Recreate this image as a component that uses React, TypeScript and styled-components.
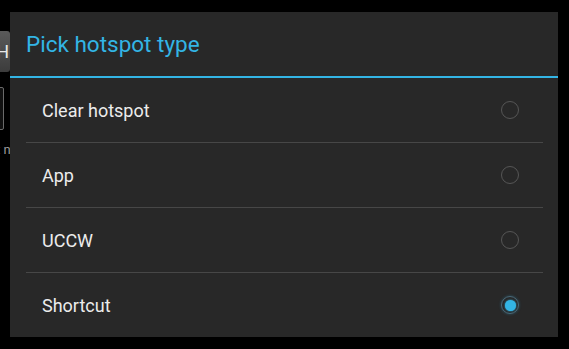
import React from "react";
import styled, { createGlobalStyle } from "styled-components";

const Global = createGlobalStyle`
  html, body { margin: 0; padding: 0; background: #000; }
  body { width: 569px; height: 349px; overflow: hidden; font-family: Roboto, "Noto Sans", sans-serif; }
`;

const Screen = styled.div`
  position: relative;
  width: 569px;
  height: 349px;
  background: #000;
  display: flex;
  padding: 12px 11px 12px 10px;
  box-sizing: border-box;
`;

const BehindButton = styled.div`
  position: absolute;
  left: -30px;
  top: 31px;
  width: 40px;
  height: 41px;
  border-radius: 3px;
  background: linear-gradient(#5a5a5a, #3c3c3c);
  color: #e8e8e8;
  font-size: 18px;
  display: flex;
  align-items: center;
  justify-content: flex-end;
  padding-right: 1px;
  box-sizing: border-box;
`;

const BehindField = styled.div`
  position: absolute;
  left: -30px;
  top: 87px;
  width: 32px;
  height: 41px;
  border: 1px solid #6a6a6a;
  border-radius: 2px;
  background: #111;
`;

const BehindText = styled.div`
  position: absolute;
  left: -4px;
  top: 142px;
  color: #9a9a9a;
  font-size: 13px;
`;

const Dialog = styled.div`
  position: relative;
  flex: 1;
  background: #282828;
  display: flex;
  flex-direction: column;
`;

const Title = styled.div`
  height: 66px;
  border-bottom: 2px solid #33b5e5;
  display: flex;
  align-items: center;
  padding-left: 16px;
  color: #33b5e5;
  font-size: 22.5px;
  box-sizing: border-box;
`;

const List = styled.div`
  display: flex;
  flex-direction: column;
  padding: 0 15px 0 16px;
`;

const Item = styled.div<{ $last?: boolean }>`
  height: ${(p) => (p.$last ? 64 : 65)}px;
  box-sizing: border-box;
  border-bottom: ${(p) => (p.$last ? "none" : "1px solid #474747")};
  display: flex;
  align-items: center;
  justify-content: space-between;
  padding: 0 24px 0 16px;
`;

const Label = styled.span`
  color: #ececec;
  font-size: 18px;
`;

const Radio = styled.span<{ $checked?: boolean }>`
  width: 18px;
  height: 18px;
  box-sizing: border-box;
  border-radius: 50%;
  border: 1.5px solid #565656;
  display: flex;
  align-items: center;
  justify-content: center;
  ${(p) =>
    p.$checked &&
    `
    border-color: #4a6a7a;
    box-shadow: 0 0 3px rgba(51,181,229,0.35);
  `}
`;

const Dot = styled.span`
  width: 11px;
  height: 11px;
  border-radius: 50%;
  background: #33b5e5;
  box-shadow: 0 0 2px #33b5e5;
`;

const items = [
  { label: "Clear hotspot", checked: false },
  { label: "App", checked: false },
  { label: "UCCW", checked: false },
  { label: "Shortcut", checked: true },
];

export default function App() {
  return (
    <>
      <Global />
      <Screen>
        <BehindButton>H</BehindButton>
        <BehindField />
        <BehindText>t n</BehindText>
        <Dialog>
          <Title>Pick hotspot type</Title>
          <List>
            {items.map((it, i) => (
              <Item key={it.label} $last={i === items.length - 1}>
                <Label>{it.label}</Label>
                <Radio $checked={it.checked}>{it.checked && <Dot />}</Radio>
              </Item>
            ))}
          </List>
        </Dialog>
      </Screen>
    </>
  );
}
